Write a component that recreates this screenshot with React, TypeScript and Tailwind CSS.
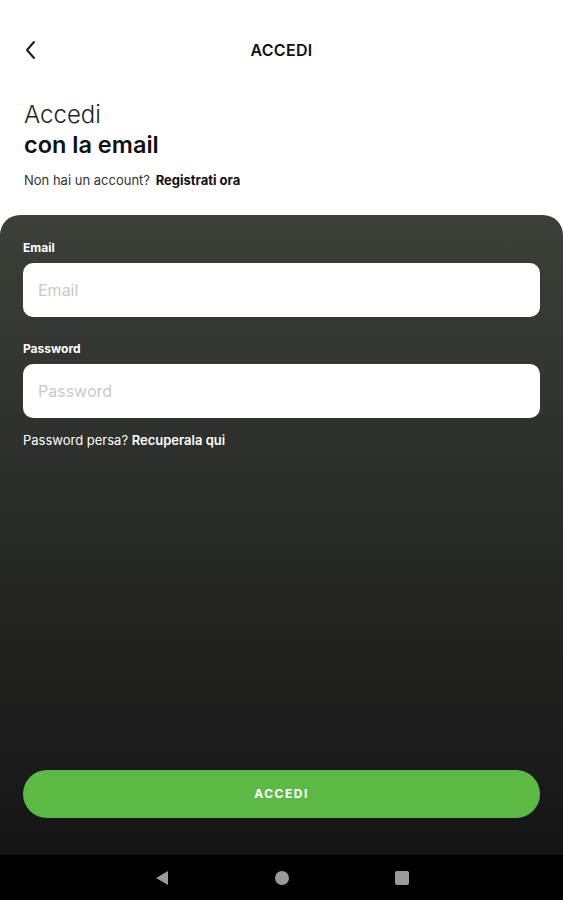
import { FunctionComponent } from 'react';

const BackIcon: FunctionComponent = () => (
  <svg width="14" height="20" viewBox="0 0 14 20" fill="none">
    <path d="M10 2L3 10L10 18" stroke="#1a1a1a" strokeWidth="2" strokeLinecap="round" strokeLinejoin="round" />
  </svg>
);

interface FieldProps {
  label: string;
  placeholder: string;
  type?: string;
}

const Field: FunctionComponent<FieldProps> = ({ label, placeholder, type = 'text' }) => (
  <div className="flex flex-col">
    <label className="text-[12px] font-bold text-white leading-[16px] mb-[7px]">{label}</label>
    <input
      type={type}
      placeholder={placeholder}
      className="h-[54px] w-full rounded-[10px] bg-white px-[15px] text-[16px] text-gray-900 placeholder:text-[#c9c9c9] outline-none"
    />
  </div>
);

export default function App() {
  return (
    <div className="flex h-[900px] w-[563px] flex-col bg-white font-['Inter',sans-serif]">
      <header className="relative mt-[30px] flex h-[40px] items-center px-[24px]">
        <BackIcon />
        <h1 className="absolute inset-0 flex items-center justify-center text-[16px] font-semibold tracking-[0.3px] text-[#111]">
          ACCEDI
        </h1>
      </header>

      <div className="px-[24px] pt-[30px]">
        <p className="text-[24px] font-light leading-[30px] text-[#222]">Accedi</p>
        <p className="text-[23.5px] font-semibold leading-[30px] text-[#111]">con la email</p>
        <p className="mt-[12px] text-[13px] leading-[17px] text-[#333]">
          Non hai un account? <span className="ml-[2px] font-bold text-[#111]">Registrati ora</span>
        </p>
      </div>

      <main className="mt-[26px] flex flex-1 flex-col rounded-t-[20px] bg-gradient-to-b from-[#3c4039] to-[#151515] px-[23px] pt-[25px] pb-[37px]">
        <div className="flex flex-col gap-[24px]">
          <Field label="Email" placeholder="Email" type="email" />
          <Field label="Password" placeholder="Password" type="password" />
        </div>
        <p className="mt-[14px] text-[13px] leading-[17px] text-white">
          Password persa? <span className="font-semibold">Recuperala qui</span>
        </p>
        <div className="flex-1" />
        <button className="h-[48px] w-full rounded-full bg-[#5cb946] text-[12px] font-bold tracking-[1.5px] text-white">
          ACCEDI
        </button>
      </main>

      <nav className="flex h-[45px] items-center justify-center bg-black">
        <div className="flex w-[120px] justify-center">
          <svg width="14" height="16" viewBox="0 0 14 16">
            <path d="M13 1V15L1 8Z" fill="#9a9a9a" />
          </svg>
        </div>
        <div className="flex w-[120px] justify-center">
          <span className="h-[14px] w-[14px] rounded-full bg-[#9a9a9a]" />
        </div>
        <div className="flex w-[120px] justify-center">
          <span className="h-[14px] w-[14px] rounded-[2px] bg-[#9a9a9a]" />
        </div>
      </nav>
    </div>
  );
}
